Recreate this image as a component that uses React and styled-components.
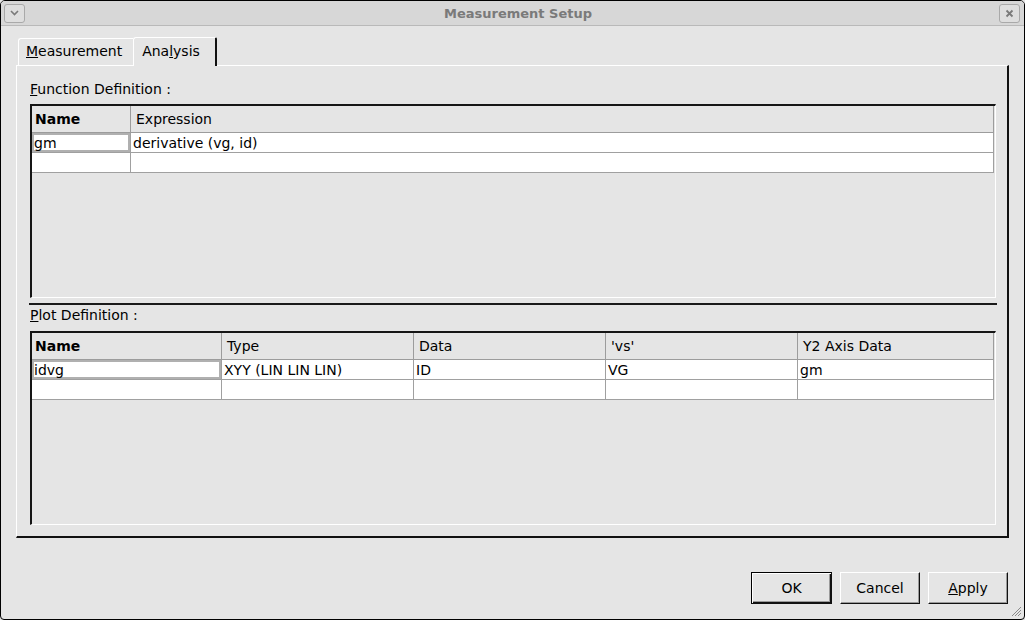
import React from "react";
import styled, { createGlobalStyle } from "styled-components";

const GlobalStyle = createGlobalStyle`
  html, body {
    margin: 0;
    padding: 0;
    background: #e5e5e5;
  }
  body {
    font-family: "DejaVu Sans", "Liberation Sans", sans-serif;
    font-size: 14px;
    color: #000;
  }
`;

const functionColumns = [{ label: "Name", bold: true }, { label: "Expression" }];
const functionRows = [["gm", "derivative (vg, id)"], ["", ""]];

const plotColumns = [
  { label: "Name", bold: true },
  { label: "Type" },
  { label: "Data" },
  { label: "'vs'" },
  { label: "Y2 Axis Data" },
];
const plotRows = [
  ["idvg", "XYY (LIN LIN LIN)", "ID", "VG", "gm"],
  ["", "", "", "", ""],
];

const Mnemonic = ({ text, index }) => (
  <>
    {text.slice(0, index)}
    <u>{text[index]}</u>
    {text.slice(index + 1)}
  </>
);

const DataTable = ({ columns, rows, template }) => (
  <Table $cols={template}>
    {columns.map((col, i) => (
      <HeaderCell key={i} $bold={col.bold} $first={i === 0}>
        {col.label}
      </HeaderCell>
    ))}
    {rows.map((row, r) =>
      row.map((value, c) => (
        <BodyCell key={`${r}-${c}`} $focus={r === 0 && c === 0}>
          {value}
        </BodyCell>
      ))
    )}
  </Table>
);

const App = () => {
  return (
    <>
      <GlobalStyle />
      <Window>
        <TitleBar>
          <TitleButton>
            <svg width="9" height="6" viewBox="0 0 9 6">
              <path d="M1 1 L4.5 4.5 L8 1" fill="none" stroke="#7a7a7a" strokeWidth="1.6" />
            </svg>
          </TitleButton>
          <Title>Measurement Setup</Title>
          <TitleButton>
            <svg width="9" height="9" viewBox="0 0 9 9">
              <path d="M1.5 1.5 L7.5 7.5 M7.5 1.5 L1.5 7.5" fill="none" stroke="#7a7a7a" strokeWidth="1.8" />
            </svg>
          </TitleButton>
        </TitleBar>

        <Body>
          <TabBar>
            <Tab>
              <Mnemonic text="Measurement" index={0} />
            </Tab>
            <Tab $active>
              <Mnemonic text="Analysis" index={3} />
            </Tab>
          </TabBar>

          <Panel>
            <SectionLabel>
              <Mnemonic text="Function Definition :" index={0} />
            </SectionLabel>
            <DataTable columns={functionColumns} rows={functionRows} template="99px 1fr" />

            <Splitter />

            <SectionLabel $tight>
              <Mnemonic text="Plot Definition :" index={0} />
            </SectionLabel>
            <DataTable
              columns={plotColumns}
              rows={plotRows}
              template="190px 192px 192px 192px 1fr"
            />
          </Panel>

          <Footer>
            <Button $default>OK</Button>
            <Button>Cancel</Button>
            <Button>
              <Mnemonic text="Apply" index={0} />
            </Button>
          </Footer>
        </Body>

        <Grip>
          <svg width="12" height="12" viewBox="0 0 12 12">
            <path d="M11 2 L2 11 M11 5 L5 11 M11 8 L8 11" stroke="#8a8a8a" strokeWidth="1" />
          </svg>
        </Grip>
      </Window>
    </>
  );
};

const Window = styled.div`
  position: relative;
  width: 1025px;
  height: 620px;
  box-sizing: border-box;
  border: 1px solid #000;
  border-radius: 5px 5px 4px 4px;
  background: #e5e5e5;
  display: flex;
  flex-direction: column;
  overflow: hidden;
`;

const TitleBar = styled.div`
  height: 24px;
  flex-shrink: 0;
  background: #d7d7d7;
  border-bottom: 1px solid #b9b9b9;
  display: flex;
  align-items: center;
  padding: 0 4px 0 3px;
`;

const TitleButton = styled.div`
  width: 19px;
  height: 17px;
  border: 1px solid #a9a9a9;
  border-radius: 3px;
  background: #dedede;
  display: flex;
  align-items: center;
  justify-content: center;
`;

const Title = styled.div`
  flex: 1;
  text-align: center;
  padding-left: 12px;
  font-size: 13px;
  font-weight: bold;
  color: #7a7a7a;
`;

const Body = styled.div`
  flex: 1;
  display: flex;
  flex-direction: column;
  padding: 11px 15px 15px 15px;
`;

const TabBar = styled.div`
  display: flex;
  align-items: flex-end;
  height: 28px;
  padding-left: 2px;
`;

const Tab = styled.div`
  position: relative;
  z-index: ${(p) => (p.$active ? 1 : 0)};
  box-sizing: border-box;
  height: ${(p) => (p.$active ? "29px" : "27px")};
  margin-bottom: ${(p) => (p.$active ? "-1px" : "0")};
  padding: ${(p) => (p.$active ? "4px 15px 0 8px" : "3px 11px 0 7px")};
  background: #e5e5e5;
  border-top: 1px solid #fff;
  border-left: 1px solid #fff;
  border-right: ${(p) => (p.$active ? "2px solid #111" : "none")};
  border-top-left-radius: 3px;
  border-top-right-radius: ${(p) => (p.$active ? "2px" : "0")};
  font-size: 14px;
  line-height: 18px;
`;

const Panel = styled.div`
  height: 473px;
  box-sizing: border-box;
  display: flex;
  flex-direction: column;
  border-top: 1px solid #fff;
  border-left: 1px solid #fff;
  border-right: 2px solid #111;
  border-bottom: 2px solid #111;
  padding: 14px 11px 11px 13px;
`;

const SectionLabel = styled.div`
  line-height: 18px;
  margin-top: ${(p) => (p.$tight ? "1px" : "0")};
  margin-bottom: ${(p) => (p.$tight ? "7px" : "6px")};
`;

const Splitter = styled.div`
  margin: 5px -1px 0 -1px;
  height: 2px;
  background: #1a1a1a;
`;

const Table = styled.div`
  height: 194px;
  box-sizing: border-box;
  border-top: 2px solid #151515;
  border-left: 2px solid #151515;
  border-right: 1px solid #fff;
  border-bottom: 1px solid #fff;
  padding: 0 1px 1px 0;
  background: #e5e5e5;
  display: grid;
  grid-template-columns: ${(p) => p.$cols};
  grid-template-rows: 27px;
  grid-auto-rows: 20px;
  align-content: start;
`;

const HeaderCell = styled.div`
  box-sizing: border-box;
  border-right: 1px solid #9c9c9c;
  border-bottom: 1px solid #9c9c9c;
  padding: 1px 0 0 ${(p) => (p.$first ? "3px" : "5px")};
  line-height: 25px;
  font-weight: ${(p) => (p.$bold ? "bold" : "normal")};
  white-space: nowrap;
  overflow: hidden;
`;

const BodyCell = styled.div`
  box-sizing: border-box;
  background: #fff;
  border-right: 1px solid #a0a0a0;
  border-bottom: 1px solid #a0a0a0;
  padding: 1px 0 0 2px;
  line-height: 18px;
  white-space: nowrap;
  overflow: hidden;
  box-shadow: ${(p) => (p.$focus ? "inset 0 0 0 2px #b0b0b0" : "none")};
`;

const Footer = styled.div`
  flex: 1;
  display: flex;
  justify-content: flex-end;
  align-items: flex-end;
  gap: 8px;
  padding-right: 1px;
`;

const Button = styled.div`
  box-sizing: border-box;
  width: ${(p) => (p.$default ? "81px" : "80px")};
  height: 32px;
  display: flex;
  align-items: center;
  justify-content: center;
  background: #e5e5e5;
  font-size: 14px;
  border-top: 1px solid ${(p) => (p.$default ? "#000" : "#fff")};
  border-left: 1px solid ${(p) => (p.$default ? "#000" : "#fff")};
  border-right: 1px solid #111;
  border-bottom: 1px solid #111;
  box-shadow: ${(p) =>
    p.$default
      ? "inset 1px 1px #fff, inset -1px -1px #111, inset -2px -2px #9a9a9a"
      : "inset -1px -1px #9a9a9a"};
`;

const Grip = styled.div`
  position: absolute;
  right: 2px;
  bottom: 2px;
  width: 12px;
  height: 12px;
  line-height: 0;
`;

export default App;
